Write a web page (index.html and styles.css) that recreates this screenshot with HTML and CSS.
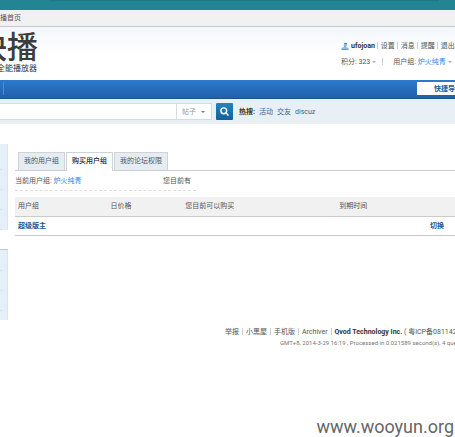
FILE: index.html
```html
<!DOCTYPE html>
<html lang="zh-CN">
<head>
<meta charset="utf-8">
<title>快播</title>
<link rel="stylesheet" href="styles.css">
</head>
<body>
<div class="banner"><div class="banner-shade"></div></div>
<div class="topbar"><a href="#">播首页</a></div>
<header class="header">
  <div class="logo">
    <div class="logo-name">快播</div>
    <div class="logo-slogan">全能播放器</div>
  </div>
  <div class="user">
    <div class="user-row">
      <svg class="user-icon" viewBox="0 0 8 8"><path d="M3 1.2Q4.500 0 6 1.200V3.500L5 5L7.500 6V7.500H.5V6L3 5Z" fill="#8db9e3"/><path d="M3 1.500H6M3 3.500L4 4.500M.5 7.500H7.500" fill="none" stroke="#4c87c2" stroke-width=".8"/></svg>
      <a href="#" class="user-name">ufojoan</a>
      <a href="#" class="split">设置</a>
      <a href="#" class="split">消息</a>
      <a href="#" class="split">提醒</a>
      <a href="#" class="split">退出</a>
    </div>
    <div class="user-row">
      <a href="#">积分: 323</a><i class="caret"></i>
      <span class="split group">用户组: <a href="#" class="rank">炉火纯青</a></span><i class="caret"></i>
    </div>
  </div>
</header>
<nav class="nav">
  <span class="nav-edge"></span>
  <a href="#" class="quick">快捷导航</a>
</nav>
<form class="search">
  <input class="search-text" type="text" aria-label="搜索">
  <button type="button" class="search-type">帖子<i class="caret dark"></i></button>
  <button type="button" class="search-go" aria-label="搜索">
    <svg viewBox="0 0 10 10"><circle cx="4.200" cy="4.200" r="3.200"/><path d="M6.500 6.500L9.500 9.500"/></svg>
  </button>
  <div class="hot"><b>热搜:</b><a href="#">活动</a><a href="#">交友</a><a href="#">discuz</a></div>
</form>
<div class="columns">
  <aside class="side">
    <div class="side-box"><span></span><span></span><span></span><span></span></div>
    <div class="side-box second"><span></span><span></span><span></span></div>
  </aside>
  <main class="main">
    <div class="tabs">
      <a href="#" class="tab">我的用户组</a>
      <a href="#" class="tab active">购买用户组</a>
      <a href="#" class="tab">我的论坛权限</a>
    </div>
    <div class="status">
      <span>当前用户组: <a href="#" class="rank">炉火纯青</a></span>
      <span>您目前有</span>
    </div>
    <table class="groups">
      <thead>
        <tr><th class="c-name">用户组</th><th class="c-price">日价格</th><th class="c-buy">您目前可以购买</th><th class="c-time">到期时间</th><th></th></tr>
      </thead>
      <tbody>
        <tr><td><a href="#">超级版主</a></td><td></td><td></td><td></td><td class="action"><a href="#">切换</a></td></tr>
      </tbody>
    </table>
  </main>
</div>
<footer class="footer">
  <div class="links">
    <a href="#">举报</a><a href="#" class="split">小黑屋</a><a href="#" class="split">手机版</a><a href="#" class="split">Archiver</a><span class="split"><b>Qvod Technology Inc.</b> ( 粤ICP备081142</span>
  </div>
  <div class="stats">GMT+8, 2014-3-29 16:19 , Processed in 0.021589 second(s), 4 que</div>
</footer>
<div class="watermark">www.wooyun.org</div>
</body>
</html>
```
FILE: styles.css
```css
* { box-sizing: border-box; }
body {
  margin: 0;
  overflow: hidden;
  background: #fff;
  color: #555;
  font: 7px/10px Roboto, "Noto Sans CJK SC", sans-serif;
  white-space: nowrap;
}
a { color: inherit; text-decoration: none; }
button, input { font: inherit; margin: 0; border: 0; padding: 0; }

.banner { height: 10px; background: #238594; }
.banner-shade { height: 2px; margin: 0 16px 0 50px; background: linear-gradient(#1c7480, #238594); }
.topbar { height: 17px; padding-top: 3px; background: #f1f1f1; border-bottom: 1px solid #c6c8cb; }

.header {
  display: flex;
  justify-content: space-between;
  height: 53px;
  background: linear-gradient(#f3f7fb, #fff 50%);
}
.logo { display: flex; flex-direction: column; align-items: flex-end; width: 38px; padding-top: 5px; overflow: hidden; }
.logo-name { font-size: 31px; line-height: 32px; font-weight: 500; color: #3c3c3c; }
.logo-slogan { padding-right: 1px; font-size: 8px; color: #333; }
.user { width: 114px; padding-top: 14px; }
.user-row { display: flex; align-items: center; height: 10px; margin-bottom: 6px; }
.user-icon { width: 8px; height: 8px; margin-right: 2px; flex: none; }
.user-name { font-weight: 700; color: #333; }
.split::before { content: ""; display: inline-block; height: 7px; margin: 0 3px 0 2px; border-left: 1px solid #ccc; vertical-align: -1px; }
.user .group::before { margin: 0 10px 0 4px; }
.rank { color: #3a80e8; }
.caret { width: 0; margin: 0 2px; border: 2px solid transparent; border-top-color: #aaa; border-bottom: 0; }
.caret.dark { margin: 0; border-top-color: #777; }

.nav {
  display: flex;
  justify-content: space-between;
  height: 19px;
  padding: 2px 0 3px;
  background: linear-gradient(#2b7acd, #2160aa);
  border-bottom: 1px solid #1d5290;
}
.nav-edge { width: 4px; border-right: 1px solid #4d8ed3; }
.quick { width: 38px; padding: 2px 0 0 17px; overflow: hidden; background: #fff; color: #235a92; font-weight: 700; }

.search { display: flex; height: 25px; padding: 4px 0; background: #e8eff5; }
.search-text { width: 176px; background: #fff; border: solid #d3dce3; border-width: 1px 0; }
.search-type {
  display: flex;
  align-items: center;
  justify-content: space-between;
  width: 36px;
  padding: 0 6px 0 5px;
  background: #fff;
  color: #999;
  border: 1px solid #d3dce3;
}
.search-go {
  display: grid;
  place-items: center;
  width: 17px;
  margin-left: 4px;
  border-radius: 1px;
  background: linear-gradient(#2583bd, #10629d);
}
.search-go svg { width: 9px; height: 9px; fill: none; stroke: #fff; stroke-width: 1.6; }
.hot { display: flex; gap: 4px; padding: 4px 0 0 6px; color: #336699; }
.hot b { color: #333; }

.columns { display: flex; padding-top: 20px; }
.side { width: 8px; flex: none; }
.side-box { height: 86px; padding-top: 6px; background: #e5eff8; border-right: 1px solid #d9e6f2; }
.side-box span { display: block; height: 20px; width: 3px; border-bottom: 1px solid #d9e4ee; }
.side-box.second { height: 71px; margin-top: 19px; padding-top: 1px; border-top: 1px solid #bfc5ca; }
.main { flex: 1; margin-left: 7px; padding-top: 8px; }
.tabs { display: flex; gap: 1px; height: 19px; padding-left: 3px; border-bottom: 1px solid #cdcdcd; }
.tab { height: 18px; padding: 3px 5px 0; background: #e5edf2; border: 1px solid #cdd3d7; border-bottom: 0; }
.tab.active { height: 19px; background: #fff; color: #222; font-weight: 500; }
.status { display: grid; grid-template-columns: 148px auto; width: 181px; height: 20px; padding-top: 5px; border-bottom: 1px dashed #ddd; }
.groups { width: 100%; margin-top: 6px; border-collapse: collapse; table-layout: fixed; }
.groups th, .groups td { height: 19px; padding: 0 3px; text-align: left; border-bottom: 1px solid #cbcbcb; }
.groups th { background: #f1f1f1; font-weight: 400; }
.groups td { color: #24558c; font-weight: 700; }
.c-name { width: 21%; }
.c-price { width: 17%; }
.c-buy { width: 35%; }
.c-time { width: 18%; }
.groups .action { padding-right: 11px; text-align: right; }

.footer { margin-top: 7px; padding-left: 225px; overflow: hidden; }
.links { height: 11px; }
.links .split::before { margin: 0 3px; }
.links b { color: #333; }
.stats { padding-left: 55px; font-size: 6px; color: #777; }
.watermark { margin-top: 68px; padding-right: 1px; text-align: right; color: #666; font: 18px/22px Roboto, sans-serif; }
```
